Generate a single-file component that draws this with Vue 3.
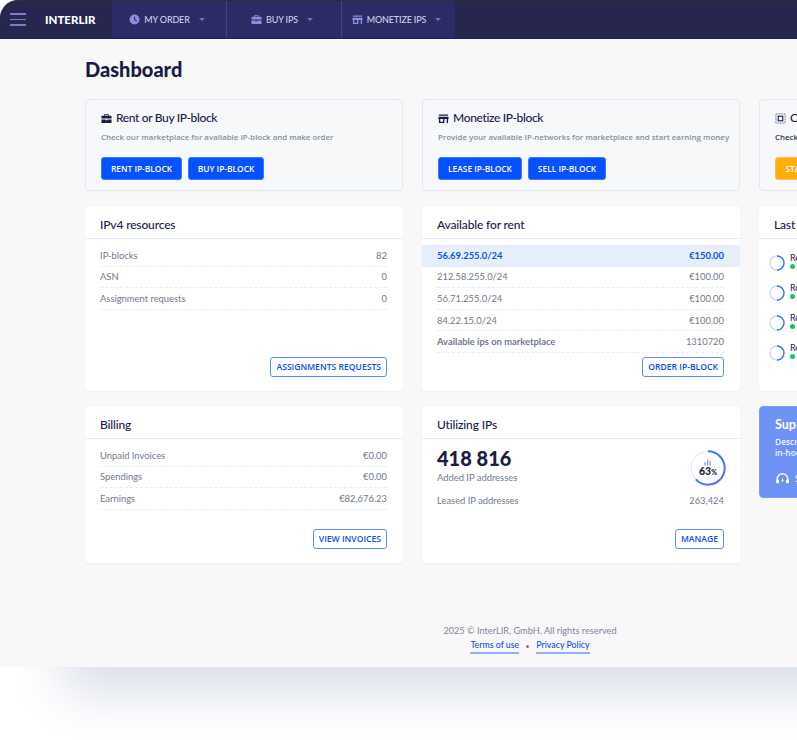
<template>
  <div class="page">
    <div class="window">
      <header class="topbar">
        <button class="burger" aria-label="menu"><span></span><span></span><span></span></button>
        <div class="logo">INTERLIR</div>
        <nav class="tabs">
          <a class="tab">
            <svg width="11" height="11" viewBox="0 0 24 24"><path fill="#8d8ddc" d="M12 1a11 11 0 1 0 0 22 11 11 0 0 0 0-22zm1.4 5v6l4.3 2.6-1.2 2-5.5-3.4V6z"/></svg>
            <span>MY ORDER</span><i class="caret"></i>
          </a>
          <a class="tab">
            <svg width="11" height="11" viewBox="0 0 24 24"><path fill="#8d8ddc" d="M9 2h6a2 2 0 0 1 2 2v2h5a1 1 0 0 1 1 1v5H1V7a1 1 0 0 1 1-1h5V4a2 2 0 0 1 2-2zm0 2v2h6V4zM1 14h9v2h4v-2h9v7a1 1 0 0 1-1 1H2a1 1 0 0 1-1-1z"/></svg>
            <span>BUY IPS</span><i class="caret"></i>
          </a>
          <a class="tab">
            <svg width="11" height="11" viewBox="0 0 24 24"><path fill="#8d8ddc" d="M2 3h20v3H2zM1 8h22v5h-1v9h-3v-9h-5v9H2v-9H1zm4 5v6h6v-6z"/></svg>
            <span>MONETIZE IPS</span><i class="caret"></i>
          </a>
        </nav>
      </header>

      <main class="content">
        <h1>Dashboard</h1>
        <div class="grid">
          <section class="promo">
            <h2>
              <svg width="11" height="11" viewBox="0 0 24 24"><path fill="#1b1b48" d="M9 2h6a2 2 0 0 1 2 2v2h5a1 1 0 0 1 1 1v5H1V7a1 1 0 0 1 1-1h5V4a2 2 0 0 1 2-2zm0 2v2h6V4zM1 14h9v2h4v-2h9v7a1 1 0 0 1-1 1H2a1 1 0 0 1-1-1z"/></svg>
              Rent or Buy IP-block
            </h2>
            <p>Check our marketplace for available IP-block and make order</p>
            <div class="promo-btns">
              <button class="solid rent">RENT IP-BLOCK</button>
              <button class="solid buy">BUY IP-BLOCK</button>
            </div>
          </section>
          <section class="promo">
            <h2>
              <svg width="11" height="11" viewBox="0 0 24 24"><path fill="#1b1b48" d="M2 3h20v3H2zM1 8h22v5h-1v9h-3v-9h-5v9H2v-9H1zm4 5v6h6v-6z"/></svg>
              Monetize IP-block
            </h2>
            <p>Provide your available IP-networks for marketplace and start earning money</p>
            <div class="promo-btns">
              <button class="solid lease">LEASE IP-BLOCK</button>
              <button class="solid sell">SELL IP-BLOCK</button>
            </div>
          </section>
          <section class="promo">
            <h2>
              <svg width="11" height="11" viewBox="0 0 24 24"><rect x="2" y="2" width="20" height="20" fill="none" stroke="#55586c" stroke-width="2" stroke-dasharray="2 1.5"/><rect x="7" y="7" width="10" height="10" fill="none" stroke="#1b1b48" stroke-width="2.4"/></svg>
              Check IP-block
            </h2>
            <p class="dark">Check your network before you start</p>
            <div class="promo-btns">
              <button class="solid orange">START CHECKING</button>
            </div>
          </section>

          <section class="card">
            <h3>IPv4 resources</h3>
            <div class="rows">
              <div class="row" v-for="r in resources" :key="r.name"><span>{{ r.name }}</span><span>{{ r.value }}</span></div>
            </div>
            <div class="actions"><button class="outline">ASSIGNMENTS REQUESTS</button></div>
          </section>
          <section class="card">
            <h3>Available for rent</h3>
            <div class="rows">
              <div class="row hl"><span>56.69.255.0/24</span><span>€150.00</span></div>
              <div class="row" v-for="r in rent" :key="r.name"><span>{{ r.name }}</span><span>{{ r.value }}</span></div>
              <div class="row"><span class="strong">Available ips on marketplace</span><span>1310720</span></div>
            </div>
            <div class="actions"><button class="outline">ORDER IP-BLOCK</button></div>
          </section>
          <section class="card">
            <h3 class="last-title">Last requests</h3>
            <div class="feed">
              <div class="feed-item" v-for="n in 4" :key="n">
                <svg width="16" height="16" viewBox="0 0 16 16">
                  <circle cx="8" cy="8" r="7" fill="none" stroke="#c9d8ff" stroke-width="1.4"/>
                  <path d="M8 1a7 7 0 0 1 0 14" fill="none" stroke="#3f75f5" stroke-width="1.4"/>
                </svg>
                <div class="feed-text">
                  <div class="feed-name">Request</div>
                  <i class="dot"></i>
                </div>
              </div>
            </div>
          </section>

          <section class="card">
            <h3>Billing</h3>
            <div class="rows">
              <div class="row" v-for="r in billing" :key="r.name"><span>{{ r.name }}</span><span>{{ r.value }}</span></div>
            </div>
            <div class="actions"><button class="outline">VIEW INVOICES</button></div>
          </section>
          <section class="card">
            <h3>Utilizing IPs</h3>
            <div class="util">
              <div class="util-top">
                <div>
                  <div class="big">418 816</div>
                  <div class="muted">Added IP addresses</div>
                </div>
                <div class="gauge">
                  <svg width="36" height="36" viewBox="0 0 36 36">
                    <circle cx="18" cy="18" r="16.7" fill="none" stroke="#e4ebfb" stroke-width="1.2"/>
                    <circle cx="18" cy="18" r="16.7" fill="none" stroke="#3f78f8" stroke-width="2" pathLength="100" stroke-dasharray="63 37" transform="rotate(-90 18 18)"/>
                    <g fill="#8d8ddc"><rect x="14.5" y="12" width="1.2" height="3.5"/><rect x="17" y="9.5" width="1.2" height="6"/><rect x="19.5" y="11" width="1.2" height="4.5"/></g>
                  </svg>
                  <span class="pct">63<small>%</small></span>
                </div>
              </div>
              <div class="leased muted"><span>Leased IP addresses</span><span>263,424</span></div>
            </div>
            <div class="actions"><button class="outline">MANAGE</button></div>
          </section>
          <section class="support">
            <h4>Support</h4>
            <p>Describe your problem to our<br />in-house support team</p>
            <div class="support-foot">
              <svg width="15" height="13" viewBox="0 0 24 22"><path fill="none" stroke="#fff" stroke-width="2.4" d="M3 14v-2a9 9 0 0 1 18 0v2"/><path fill="#fff" d="M1 13h5v6H3a2 2 0 0 1-2-2zM23 13h-5v6h3a2 2 0 0 0 2-2zM10 16l2-6 2 6z"/></svg>
              <span>Support center</span>
            </div>
          </section>
        </div>

        <footer class="foot">
          <div>2025 © InterLIR, GmbH. All rights reserved</div>
          <div class="foot-links"><a>Terms of use</a><i></i><a>Privacy Policy</a></div>
        </footer>
      </main>
    </div>
  </div>
</template>

<script setup>
const resources = [
  { name: 'IP-blocks', value: '82' },
  { name: 'ASN', value: '0' },
  { name: 'Assignment requests', value: '0' }
]

const rent = [
  { name: '212.58.255.0/24', value: '€100.00' },
  { name: '56.71.255.0/24', value: '€100.00' },
  { name: '84.22.15.0/24', value: '€100.00' }
]

const billing = [
  { name: 'Unpaid Invoices', value: '€0.00' },
  { name: 'Spendings', value: '€0.00' },
  { name: 'Earnings', value: '€82,676.23' }
]
</script>

<style>
html, body {
  margin: 0;
  background: #fff;
}
</style>

<style scoped>
.page {
  width: 797px;
  height: 740px;
  overflow: hidden;
  background: #fff;
  font-family: "Lato", "Liberation Sans", sans-serif;
}

.window {
  width: 1060px;
  height: 667px;
  background: #f8f8f9;
  border-top-left-radius: 18px;
  box-shadow: 0 88px 50px -63px #d8dde9;
}

.topbar {
  height: 39px;
  box-sizing: border-box;
  display: flex;
  align-items: stretch;
  background: #26264f;
  border-top: 1px solid #2f2f33;
  border-bottom: 1px solid #1d1d5c;
  border-top-left-radius: 18px;
}

.burger {
  width: 45px;
  padding: 0 0 0 10px;
  border: 0;
  background: none;
  display: flex;
  flex-direction: column;
  justify-content: center;
  gap: 4px;
}

.burger span {
  display: block;
  width: 16px;
  height: 1.5px;
  background: #7c7cc8;
}

.logo {
  width: 67px;
  line-height: 37px;
  font-size: 11.5px;
  font-weight: 900;
  color: #fff;
}

.tabs {
  display: flex;
}

.tab {
  width: 115px;
  box-sizing: border-box;
  padding-right: 4px;
  display: flex;
  align-items: center;
  justify-content: center;
  gap: 4px;
  background: #2b2b66;
  border-right: 1px solid #45457f;
  color: #cfcfe8;
  font-size: 9px;
  letter-spacing: -0.15px;
  font-weight: 500;
}

.tab:last-child {
  width: 113px;
  border-right: 0;
}

.caret {
  width: 0;
  height: 0;
  margin-left: 5px;
  border-left: 3.5px solid transparent;
  border-right: 3.5px solid transparent;
  border-top: 3.5px solid #7474ac;
}

.content {
  padding-left: 85px;
}

h1 {
  margin: 0;
  padding-top: 17px;
  height: 43px;
  font-size: 20px;
  line-height: 26px;
  font-weight: 900;
  color: #1b1b48;
}

.grid {
  display: grid;
  grid-template-columns: repeat(3, 318px);
  grid-template-rows: 92px 185px 157px;
  gap: 15px 19px;
}

.promo {
  box-sizing: border-box;
  padding: 10px 15px 0;
  background: #f7f8fa;
  border: 1px solid #e2e8f8;
  border-radius: 4px;
}

.promo h2 {
  margin: 0;
  display: flex;
  align-items: center;
  gap: 4px;
  font-size: 12px;
  letter-spacing: -0.35px;
  line-height: 16px;
  font-weight: 500;
  color: #1b1b48;
}

.promo p {
  margin: 4px 0 0;
  font-family: "Open Sans", "Liberation Sans", sans-serif;
  font-size: 7.9px;
  line-height: 14px;
  font-weight: 600;
  color: #858fa2;
  white-space: nowrap;
}

.promo p.dark {
  color: #33364a;
}

.promo-btns {
  display: flex;
  gap: 6px;
  margin-top: 13px;
}

.solid {
  height: 23px;
  padding: 0;
  border: 1px solid #3f78fb;
  border-radius: 3px;
  background: #0550ff;
  color: #fff;
  font-family: "Open Sans", "Liberation Sans", sans-serif;
  font-size: 8.4px;
  font-weight: 600;
}

.rent { width: 81px; }
.buy { width: 76px; }
.lease { width: 84px; }
.sell { width: 78px; }

.orange {
  width: 90px;
  background: #ffae0d;
  border-color: #ffc043;
}

.card {
  display: flex;
  flex-direction: column;
  background: #fff;
  border-radius: 4px;
  box-shadow: 0 1px 3px rgba(40, 50, 90, 0.05);
}

.card h3 {
  margin: 0;
  height: 33px;
  box-sizing: border-box;
  padding: 0 15px;
  line-height: 37px;
  font-size: 12px;
  letter-spacing: -0.15px;
  font-weight: 500;
  color: #1b1b48;
  border-bottom: 1px solid #e6ecfa;
  flex-shrink: 0;
}

.rows {
  padding-top: 6px;
}

.row {
  height: 21.6px;
  box-sizing: border-box;
  margin: 0 16px 0 15px;
  display: flex;
  align-items: center;
  justify-content: space-between;
  font-size: 9.4px;
  color: #6f7a8f;
  border-bottom: 1px dashed #e6ebf8;
}

.row.hl {
  margin: 0;
  padding: 0 16px 0 15px;
  background: #e8effc;
  border-bottom: 0;
  color: #0a50f0;
  font-weight: 700;
}

.strong {
  font-weight: 700;
}

.actions {
  margin-top: auto;
  padding: 0 16px 14px;
  display: flex;
  justify-content: flex-end;
}

.outline {
  height: 20px;
  padding: 0 5px;
  background: #fff;
  border: 1px solid #5a8cff;
  border-radius: 3px;
  color: #0a50f0;
  font-family: "Open Sans", "Liberation Sans", sans-serif;
  font-size: 8.6px;
  font-weight: 600;
  white-space: nowrap;
}

.last-title {
  padding-top: 1px;
}

.feed {
  padding: 16px 10px 0;
}

.feed-item {
  display: flex;
  gap: 5px;
  height: 30px;
}

.feed-name {
  margin-top: -3px;
  font-size: 9px;
  line-height: 11px;
  color: #1b1b48;
}

.dot {
  display: block;
  width: 5px;
  height: 5px;
  margin-top: 1px;
  border-radius: 50%;
  background: #0ccb5c;
}

.util {
  padding: 6px 16px 0 15px;
}

.util-top {
  display: flex;
  justify-content: space-between;
  align-items: flex-start;
}

.big {
  font-size: 20px;
  line-height: 26px;
  font-weight: 900;
  color: #1b1b48;
}

.muted {
  font-size: 9.4px;
  line-height: 14px;
  color: #6f7a8f;
}

.gauge {
  position: relative;
  width: 36px;
  height: 36px;
  margin-top: 5px;
  margin-right: -2px;
}

.pct {
  position: absolute;
  left: 0;
  right: 0;
  top: 15px;
  text-align: center;
  font-size: 10.5px;
  line-height: 12px;
  font-weight: 900;
  color: #1b1b48;
}

.pct small {
  font-size: 7px;
}

.leased {
  display: flex;
  justify-content: space-between;
  margin-top: 8px;
}

.support {
  box-sizing: border-box;
  height: 92px;
  padding: 10px 15px;
  border-radius: 4px;
  border: 1px solid #7d9df5;
  background: linear-gradient(90deg, #6f92f5, #5d86f5);
  color: #fff;
}

.support h4 {
  margin: 0;
  font-size: 12.5px;
  line-height: 16px;
  font-weight: 700;
}

.support p {
  margin: 3px 0 0;
  font-family: "Open Sans", "Liberation Sans", sans-serif;
  font-size: 8.4px;
  line-height: 11px;
  font-weight: 600;
  opacity: 0.9;
}

.support-foot {
  display: flex;
  align-items: center;
  gap: 5px;
  margin-top: 14px;
  font-size: 9px;
}

.foot {
  margin-left: -85px;
  padding-top: 61px;
  text-align: center;
  font-size: 9.2px;
  line-height: 14px;
  color: #7f899c;
}

.foot-links {
  margin-top: 0;
  display: flex;
  justify-content: center;
  align-items: center;
  gap: 5px;
  font-size: 8.8px;
}

.foot-links a {
  color: #0a50f0;
  font-weight: 500;
  border-bottom: 2px solid #8fb0ff;
}

.foot-links i {
  width: 3px;
  height: 3px;
  border-radius: 50%;
  background: #6f7a8f;
  margin: 0 2px;
}
</style>
